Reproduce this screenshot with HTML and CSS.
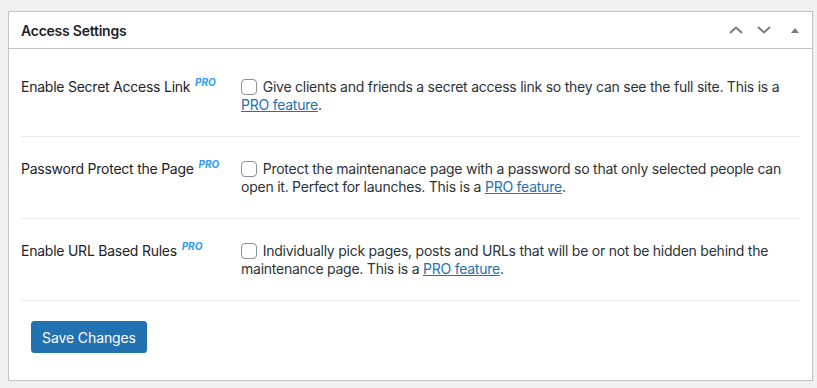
FILE: index.html
```html
<!DOCTYPE html>
<html lang="en">
<head>
    <meta charset="UTF-8">
    <meta name="viewport" content="width=device-width, initial-scale=1.0">
    <title>Access Settings</title>
    <link rel="stylesheet" href="styles.css">
</head>
<body>
    <div class="postbox">
        <div class="postbox-header">
            <h2>Access Settings</h2>
            <div class="handle-actions">
                <button class="handle-btn" aria-label="Move up">
                    <svg width="14" height="8" viewBox="0 0 14 8"><path d="M1 7 L7 1.5 L13 7" fill="none" stroke="#787c82" stroke-width="2"/></svg>
                </button>
                <button class="handle-btn" aria-label="Move down">
                    <svg width="14" height="8" viewBox="0 0 14 8"><path d="M1 1 L7 6.5 L13 1" fill="none" stroke="#787c82" stroke-width="2"/></svg>
                </button>
                <button class="handle-btn toggle" aria-label="Toggle panel">
                    <svg width="8" height="5" viewBox="0 0 8 5"><path d="M0 5 L4 0 L8 5 Z" fill="#787c82"/></svg>
                </button>
            </div>
        </div>
        <div class="inside">
            <div class="form-rows">
                <div class="form-row">
                    <div class="row-label">Enable Secret Access Link <sup class="pro">PRO</sup></div>
                    <label class="row-field">
                        <input type="checkbox">
                        Give clients and friends a secret access link so they can see the full site. This is a <a href="#">PRO feature</a>.
                    </label>
                </div>
                <div class="form-row">
                    <div class="row-label">Password Protect the Page <sup class="pro">PRO</sup></div>
                    <label class="row-field">
                        <input type="checkbox">
                        Protect the maintenanace page with a password so that only selected people can open it. Perfect for launches. This is a <a href="#">PRO feature</a>.
                    </label>
                </div>
                <div class="form-row">
                    <div class="row-label">Enable URL Based Rules <sup class="pro">PRO</sup></div>
                    <label class="row-field">
                        <input type="checkbox">
                        Individually pick pages, posts and URLs that will be or not be hidden behind the maintenance page. This is a <a href="#">PRO feature</a>.
                    </label>
                </div>
            </div>
            <button class="button-primary">Save Changes</button>
        </div>
    </div>
</body>
</html>
```

FILE: styles.css
```css
body {
    margin: 0;
    padding: 11px 0 0 8px;
    font-family: Inter, "Noto Sans", sans-serif;
    font-size: 14px;
    letter-spacing: -0.24px;
    color: #1d2327;
    background-color: #f0f0f1;
}

.postbox {
    width: 805px;
    box-sizing: border-box;
    background-color: #fff;
    border: 1px solid #c3c4c7;
    box-shadow: 0 1px 1px rgba(0, 0, 0, 0.04);
}

.postbox-header {
    display: flex;
    justify-content: space-between;
    align-items: center;
    height: 36px;
    border-bottom: 1px solid #c3c4c7;
    padding-left: 12px;
}

.postbox-header h2 {
    margin: 0;
    font-size: 14px;
    font-weight: 600;
    color: #1d2327;
}

.handle-actions {
    display: flex;
    align-items: center;
}

.handle-btn {
    display: flex;
    justify-content: center;
    align-items: center;
    width: 28px;
    height: 36px;
    padding: 0;
    border: none;
    background: none;
    cursor: pointer;
}

.handle-btn.toggle {
    width: 34px;
}

.inside {
    padding: 6px 12px 27px;
}

.form-row {
    display: flex;
    padding: 23px 0 22px;
    border-bottom: 1px solid #ebebeb;
    line-height: 18px;
}

.row-label {
    width: 220px;
    flex-shrink: 0;
    color: #1d2327;
}

.pro {
    font-size: 10px;
    font-weight: 700;
    font-style: italic;
    letter-spacing: 0;
    color: #2d9cf0;
    vertical-align: 6px;
    line-height: 0;
    margin-left: 1px;
}

.row-field {
    flex: 1;
    color: #2c3338;
    padding-right: 4px;
}

.row-field input {
    appearance: none;
    width: 16px;
    height: 16px;
    margin: 0 2px -3px 0;
    border: 1px solid #8c8f94;
    border-radius: 4px;
    background: #fff;
    box-sizing: border-box;
}

.row-field a {
    color: #2271b1;
    text-decoration: underline;
}

.button-primary {
    margin: 20px 0 0 10px;
    height: 32px;
    padding: 0 10px;
    font-family: inherit;
    font-size: 14px;
    letter-spacing: -0.1px;
    color: #fff;
    background-color: #2271b1;
    border: 1px solid #2271b1;
    border-radius: 3px;
    cursor: pointer;
}
```
